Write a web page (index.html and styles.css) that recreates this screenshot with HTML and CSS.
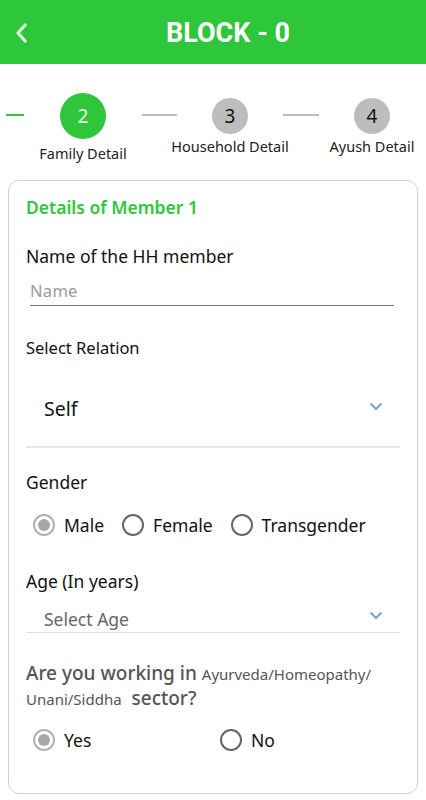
FILE: index.html
```html
<!DOCTYPE html>
<html>
<head>
<meta charset="utf-8">
<link rel="stylesheet" href="styles.css">
</head>
<body>
<header class="topbar">
  <div class="back">
    <svg width="20" height="28" viewBox="0 0 20 28"><path d="M14 4 L5 14 L14 24" fill="none" stroke="#d9f7d9" stroke-width="4" stroke-linecap="round" stroke-linejoin="round"/></svg>
  </div>
  <h1 class="title">BLOCK - 0</h1>
</header>

<div class="stepper">
  <div class="line line-first green"></div>
  <div class="step step-active">
    <div class="circle big">2</div>
    <div class="label">Family Detail</div>
  </div>
  <div class="line line-mid"></div>
  <div class="step">
    <div class="circle">3</div>
    <div class="label">Household Detail</div>
  </div>
  <div class="line line-last"></div>
  <div class="step">
    <div class="circle">4</div>
    <div class="label">Ayush Detail</div>
  </div>
</div>

<div class="card">
  <div class="card-title">Details of Member 1</div>

  <div class="field-label name-label">Name of the HH member</div>
  <div class="input-line"><span class="placeholder">Name</span></div>

  <div class="field-label relation-label">Select Relation</div>
  <div class="select self-select">
    <span class="select-value">Self</span>
    <svg class="chev" width="14" height="9" viewBox="0 0 14 9"><path d="M1.5 1.5 L7 7 L12.5 1.5" fill="none" stroke="#7ba3c9" stroke-width="2"/></svg>
  </div>

  <div class="field-label gender-label">Gender</div>
  <div class="radios gender">
    <label class="radio"><span class="dot checked"></span>Male</label>
    <label class="radio"><span class="dot"></span>Female</label>
    <label class="radio"><span class="dot"></span>Transgender</label>
  </div>

  <div class="field-label age-label">Age (In years)</div>
  <div class="select age-select">
    <span class="select-placeholder">Select Age</span>
    <svg class="chev" width="14" height="9" viewBox="0 0 14 9"><path d="M1.5 1.5 L7 7 L12.5 1.5" fill="none" stroke="#7ba3c9" stroke-width="2"/></svg>
  </div>

  <div class="question">
    <span class="q-big">Are you working in </span><span class="q-small">Ayurveda/Homeopathy/ Unani/Siddha</span><span class="q-big"> &nbsp;sector?</span>
  </div>
  <div class="radios yesno">
    <label class="radio yes"><span class="dot checked"></span>Yes</label>
    <label class="radio"><span class="dot"></span>No</label>
  </div>

  <div class="next-q">Is the ayush facility available in your area</div>
</div>
</body>
</html>
```
FILE: styles.css
```css
* { box-sizing: border-box; }
html, body { margin: 0; padding: 0; background: #fff; }
body {
  width: 426px;
  height: 800px;
  overflow: hidden;
  font-family: "Noto Sans", "Open Sans", sans-serif;
  color: #111;
}

.topbar {
  height: 64px;
  background: #2ec63b;
  display: flex;
  align-items: center;
}
.back {
  width: 30px;
  padding-left: 14px;
  display: flex;
  align-items: center;
  height: 100%;
  padding-top: 2px;
}
.title {
  flex: 1;
  margin: 0;
  text-align: center;
  color: #fff;
  font-family: Roboto, "Liberation Sans", sans-serif;
  font-weight: 700;
  font-size: 27px;
  padding-top: 2px;
}

.stepper {
  display: flex;
  align-items: flex-start;
  padding-top: 29px;
  padding-left: 6px;
  height: 116px;
}
.line {
  height: 2px;
  background: #bdbdbd;
  margin-top: 21px;
}
.line.green { background: #2ec63b; }
.line-first { width: 18px; }
.line-mid { width: 35px; }
.line-last { width: 36px; }
.step {
  width: 106px;
  display: flex;
  flex-direction: column;
  align-items: center;
  margin-top: 5px;
}
.step-active {
  width: 118px;
  margin-top: 0;
}
.circle {
  width: 36px;
  height: 36px;
  border-radius: 50%;
  background: #bdbdbd;
  color: #111;
  display: flex;
  align-items: center;
  justify-content: center;
  font-size: 19px;
}
.circle.big {
  width: 46px;
  height: 46px;
  background: #2ec63b;
  color: #e8fbe8;
}
.label {
  white-space: nowrap;
  font-size: 14.5px;
  color: #222;
  line-height: 18px;
  margin-top: 3px;
}
.step-active .label { margin-top: 5px; }

.card {
  margin-left: 8px;
  width: 410px;
  height: 614px;
  border: 1px solid #d2d2d2;
  border-radius: 11px;
  padding: 0 17px;
  overflow: hidden;
}
.card-title {
  color: #2ec63b;
  font-size: 17.5px;
  font-weight: 600;
  line-height: 24px;
  margin-top: 14px;
}
.field-label {
  font-size: 17.5px;
  line-height: 24px;
  color: #111;
}
.name-label { margin-top: 25px; }
.input-line {
  margin-left: 4px;
  width: 364px;
  border-bottom: 1px solid #777;
  height: 38px;
  padding-top: 11px;
}
.placeholder {
  display: block;
  color: #9a9a9a;
  font-size: 16.5px;
  line-height: 24px;
  letter-spacing: 0.3px;
}
.relation-label { margin-top: 30px; font-size: 16.5px; }

.select {
  display: flex;
  align-items: center;
  justify-content: space-between;
  padding-left: 18px;
  padding-right: 17px;
}
.self-select {
  height: 88px;
  border-bottom: 2px solid #e6e6e6;
  padding-top: 10px;
}
.select-value { font-size: 19.5px; color: #111; }
.chev { margin-top: -4px; }

.gender-label { margin-top: 22px; }
.radios {
  display: flex;
  align-items: center;
  height: 44px;
  margin-top: 9px;
  padding-left: 7px;
}
.radio {
  display: flex;
  align-items: center;
  font-size: 17.5px;
  color: #111;
  margin-right: 18px;
}
.dot {
  width: 22px;
  height: 22px;
  border-radius: 50%;
  border: 2px solid #666;
  margin-right: 9px;
  display: inline-block;
  position: relative;
}
.dot.checked {
  border-color: #b0b0b0;
}
.dot.checked::after {
  content: "";
  position: absolute;
  left: 3px; top: 3px;
  width: 12px; height: 12px;
  border-radius: 50%;
  background: #a8a8a8;
}

.age-label { margin-top: 22px; }
.age-select {
  height: 40px;
  border-bottom: 1px solid #e0e0e0;
  padding-top: 2px;
  align-items: flex-end;
}
.select-placeholder { color: #666; font-size: 17.5px; line-height: 26px; }
.age-select .chev { margin-bottom: 12px; }

.question {
  margin-top: 28px;
  color: #555;
  line-height: 24px;
  width: 370px;
}
.q-big { font-size: 19px; font-weight: 500; }
.q-small { font-size: 15px; }

.yesno { margin-top: 7px; }
.yes { width: 187px; margin-right: 0; }

.next-q {
  margin-top: 26px;
  font-size: 17px;
  line-height: 23px;
  color: #111;
}
```
